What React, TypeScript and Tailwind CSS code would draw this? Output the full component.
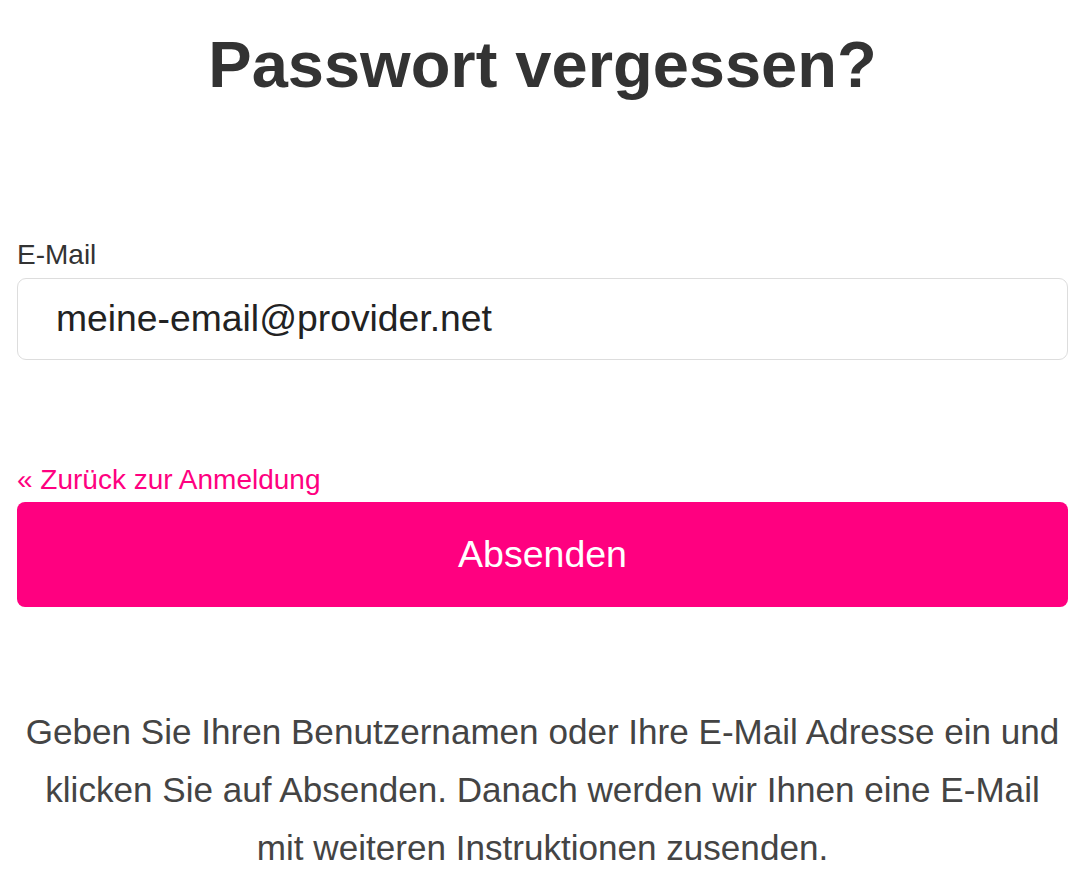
export default function App() {
  return (
    <div className="w-[1090px] h-[877px] bg-white overflow-hidden" style={{ fontFamily: '"Liberation Sans", Arial, sans-serif' }}>
      <div className="pl-[17px] pr-[22px]">
        <h1 className="text-center text-[65px] font-bold text-[#333] leading-[76px] pt-[27px]">Passwort vergessen?</h1>
        <div className="mt-[136px]">
          <label className="block text-[28px] leading-[32px] text-[#333]">E-Mail</label>
          <div className="mt-[7px] h-[82px] border border-[#dddddd] rounded-[9px] flex items-center pl-[38px] text-[37.3px] text-[#222]">
            meine-email@provider.net
          </div>
        </div>
        <a className="block mt-[104px] text-[28px] leading-[32px] text-[#ff0080]">« Zurück zur Anmeldung</a>
        <button className="mt-[6px] w-full h-[105px] rounded-[8px] bg-[#ff0080] text-white text-[37.5px]">Absenden</button>
        <p className="mt-[96px] px-[5px] text-center text-[35.1px] leading-[58px] text-[#444]">
          Geben Sie Ihren Benutzernamen oder Ihre E-Mail Adresse ein und klicken Sie auf Absenden. Danach werden wir Ihnen eine E-Mail mit weiteren Instruktionen zusenden.
        </p>
      </div>
    </div>
  );
}
